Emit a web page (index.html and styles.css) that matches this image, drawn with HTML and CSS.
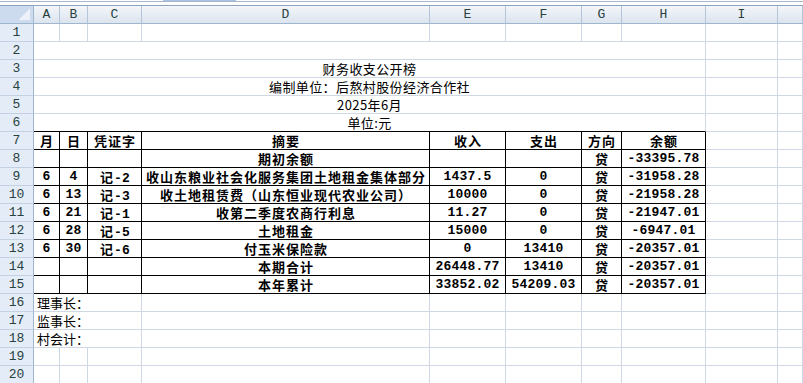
FILE: index.html
```html
<!DOCTYPE html>
<html lang="zh-CN">
<head>
<meta charset="utf-8">
<title>财务收支公开榜</title>
<link rel="stylesheet" href="styles.css">
</head>
<body>
<div class="top"><div class="tab"></div></div>
<div class="sheet">
  <div class="c ch corner"></div><div class="c ch">A</div><div class="c ch">B</div><div class="c ch">C</div><div class="c ch">D</div><div class="c ch">E</div><div class="c ch">F</div><div class="c ch">G</div><div class="c ch">H</div><div class="c ch">I</div><div class="c ch"></div>

  <div class="c rh">1</div><div class="c"></div><div class="c"></div><div class="c"></div><div class="c"></div><div class="c"></div><div class="c"></div><div class="c"></div><div class="c"></div><div class="c"></div><div class="c"></div>

  <div class="c rh">2</div><div class="c m8"></div><div class="c"></div><div class="c"></div>
  <div class="c rh">3</div><div class="c m8 tx">财务收支公开榜</div><div class="c"></div><div class="c"></div>
  <div class="c rh">4</div><div class="c m8 tx">编制单位：后熬村股份经济合作社</div><div class="c"></div><div class="c"></div>
  <div class="c rh">5</div><div class="c m8 tx">2025年6月</div><div class="c"></div><div class="c"></div>
  <div class="c rh">6</div><div class="c m8 tx tb">单位:元 </div><div class="c"></div><div class="c"></div>

  <div class="c rh">7</div><div class="c t b">月</div><div class="c t b">日</div><div class="c t b">凭证字</div><div class="c t b">摘要</div><div class="c t b">收入</div><div class="c t b">支出</div><div class="c t b">方向</div><div class="c t b">余额</div><div class="c"></div><div class="c"></div>

  <div class="c rh">8</div><div class="c t"></div><div class="c t"></div><div class="c t"></div><div class="c t b">期初余额</div><div class="c t"></div><div class="c t"></div><div class="c t b">贷</div><div class="c t n">-33395.78</div><div class="c"></div><div class="c"></div>

  <div class="c rh">9</div><div class="c t n">6</div><div class="c t n">4</div><div class="c t b">记<span class="n">-2</span></div><div class="c t b">收山东粮业社会化服务集团土地租金集体部分</div><div class="c t n">1437.5</div><div class="c t n">0</div><div class="c t b">贷</div><div class="c t n">-31958.28</div><div class="c"></div><div class="c"></div>

  <div class="c rh">10</div><div class="c t n">6</div><div class="c t n">13</div><div class="c t b">记<span class="n">-3</span></div><div class="c t b">收土地租赁费（山东恒业现代农业公司）</div><div class="c t n">10000</div><div class="c t n">0</div><div class="c t b">贷</div><div class="c t n">-21958.28</div><div class="c"></div><div class="c"></div>

  <div class="c rh">11</div><div class="c t n">6</div><div class="c t n">21</div><div class="c t b">记<span class="n">-1</span></div><div class="c t b">收第二季度农商行利息</div><div class="c t n">11.27</div><div class="c t n">0</div><div class="c t b">贷</div><div class="c t n">-21947.01</div><div class="c"></div><div class="c"></div>

  <div class="c rh">12</div><div class="c t n">6</div><div class="c t n">28</div><div class="c t b">记<span class="n">-5</span></div><div class="c t b">土地租金</div><div class="c t n">15000</div><div class="c t n">0</div><div class="c t b">贷</div><div class="c t n">-6947.01</div><div class="c"></div><div class="c"></div>

  <div class="c rh">13</div><div class="c t n">6</div><div class="c t n">30</div><div class="c t b">记<span class="n">-6</span></div><div class="c t b">付玉米保险款</div><div class="c t n">0</div><div class="c t n">13410</div><div class="c t b">贷</div><div class="c t n">-20357.01</div><div class="c"></div><div class="c"></div>

  <div class="c rh">14</div><div class="c t"></div><div class="c t"></div><div class="c t"></div><div class="c t b">本期合计</div><div class="c t n">26448.77</div><div class="c t n">13410</div><div class="c t b">贷</div><div class="c t n">-20357.01</div><div class="c"></div><div class="c"></div>

  <div class="c rh">15</div><div class="c t"></div><div class="c t"></div><div class="c t"></div><div class="c t b">本年累计</div><div class="c t n">33852.02</div><div class="c t n">54209.03</div><div class="c t b">贷</div><div class="c t n">-20357.01</div><div class="c"></div><div class="c"></div>

  <div class="c rh">16</div><div class="c m3 l">理事长：</div><div class="c"></div><div class="c"></div><div class="c"></div><div class="c"></div><div class="c"></div><div class="c"></div><div class="c"></div>
  <div class="c rh">17</div><div class="c m3 l">监事长：</div><div class="c"></div><div class="c"></div><div class="c"></div><div class="c"></div><div class="c"></div><div class="c"></div><div class="c"></div>
  <div class="c rh">18</div><div class="c m3 l">村会计：</div><div class="c"></div><div class="c"></div><div class="c"></div><div class="c"></div><div class="c"></div><div class="c"></div><div class="c"></div>

  <div class="c rh">19</div><div class="c"></div><div class="c"></div><div class="c"></div><div class="c"></div><div class="c"></div><div class="c"></div><div class="c"></div><div class="c"></div><div class="c"></div><div class="c"></div>
  <div class="c rh">20</div><div class="c"></div><div class="c"></div><div class="c"></div><div class="c"></div><div class="c"></div><div class="c"></div><div class="c"></div><div class="c"></div><div class="c"></div><div class="c"></div>
</div>
</body>
</html>
```
FILE: styles.css
```css
html, body {
  margin: 0;
  padding: 0;
}
body {
  width: 803px;
  height: 383px;
  overflow: hidden;
  background: #fff;
  font-family: "Noto Sans CJK SC", sans-serif;
  color: #000;
}
.top {
  height: 6px;
  background: linear-gradient(to bottom, #fff 0 1px, #a6b7cb 1px 2px, #fff 2px 5px, #8ea4bf 5px 6px);
}
.tab {
  margin-left: 163px;
  width: 73px;
  height: 1px;
  background: #a9c1e3;
}
.sheet {
  display: grid;
  grid-template-columns: 34px 26px 28px 54px 288px 76px 76px 40px 84px 72px 1fr;
  grid-auto-rows: 18px;
}
.c {
  box-sizing: border-box;
  border-right: 1px solid #d0d7e5;
  border-bottom: 1px solid #d0d7e5;
  font-size: 13px;
  line-height: 17px;
  white-space: nowrap;
  overflow: hidden;
  text-align: center;
}
.ch {
  background: linear-gradient(to bottom, #f3f6fa, #dce4ee);
  border-right-color: #b4c5da;
  border-bottom-color: #9eb6ce;
  color: #27413e;
  font-family: "Liberation Mono", monospace;
  font-size: 13px;
}
.corner {
  background:
    linear-gradient(to bottom right, transparent 50%, #edf2f9 50%) no-repeat right 3px bottom 3px / 11px 11px,
    #cddbee;
  border-right-color: #9eb6ce;
}
.rh {
  background: #e4ecf7;
  border-right-color: #9eb6ce;
  border-bottom-color: #c3d1e3;
  color: #27413e;
  font-family: "Liberation Mono", monospace;
  font-size: 13px;
}
.m8 { grid-column: span 8; }
.m3 { grid-column: span 3; }
.tx {
  letter-spacing: 0.4px;
}
.tb {
  border-bottom-color: #000;
}
.t {
  border-right-color: #000;
  border-bottom-color: #000;
}
.b {
  font-weight: 700;
  letter-spacing: 1px;
  padding-left: 1px;
}
.n {
  font-family: "Liberation Mono", "Noto Sans CJK SC", monospace;
  font-weight: 700;
  font-size: 13px;
  letter-spacing: 0.2px;
}
.l {
  text-align: left;
  padding-left: 3px;
}
```
